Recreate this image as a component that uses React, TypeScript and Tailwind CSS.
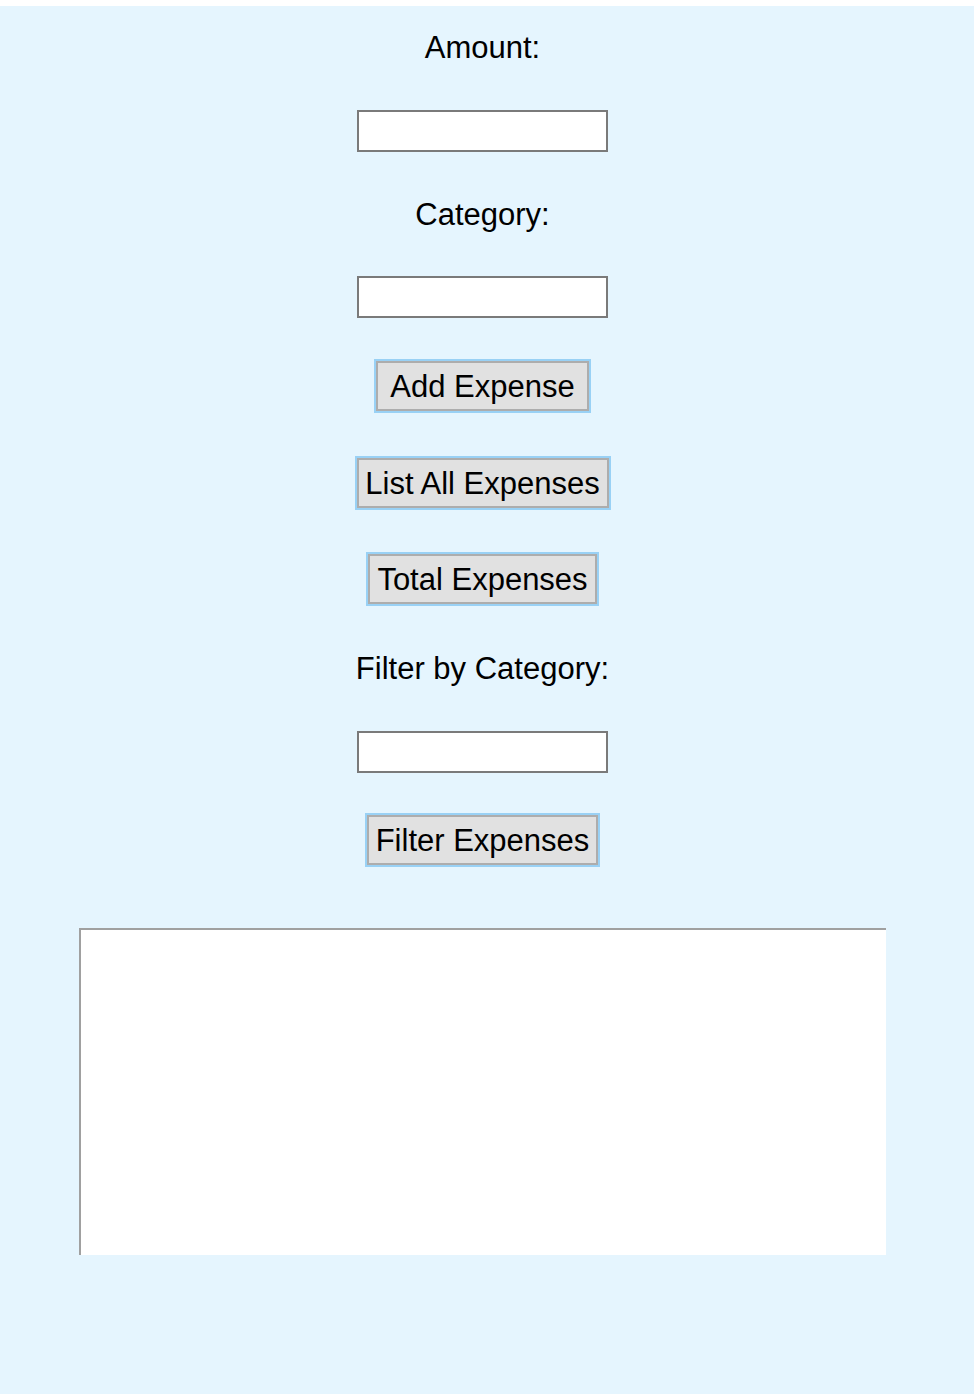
const Field = ({ className = "" }: { className?: string }) => (
  <input
    type="text"
    className={`block w-[251px] h-[42px] border-2 border-[#7a7a7a] bg-white outline-none ${className}`}
  />
);

const Btn = ({ label, className = "" }: { label: string; className?: string }) => (
  <button className={`block h-[54px] border-2 border-[#99d1f5] ${className}`}>
    <span className="flex h-full w-full items-center justify-center border-2 border-[#adadad] bg-[#e1e1e1] leading-none text-black whitespace-nowrap">
      {label}
    </span>
  </button>
);

export default function App() {
  return (
    <div className="bg-white pt-[6px] font-['Liberation_Sans',Arial,sans-serif] text-[31px] text-black">
      <div className="h-[1388px] w-full bg-[#e5f5fe]">
        <div className="flex w-[965px] flex-col items-center">
          <label className="mt-[25px] block h-[34px] leading-[34px]">Amount:</label>
          <Field className="mt-[45px]" />
          <label className="mt-[46px] block h-[34px] leading-[34px]">Category:</label>
          <Field className="mt-[44px]" />
          <Btn label="Add Expense" className="mt-[41px] w-[217px]" />
          <Btn label="List All Expenses" className="mt-[43px] w-[256px]" />
          <Btn label="Total Expenses" className="mt-[42px] w-[233px]" />
          <label className="mt-[46px] block h-[34px] leading-[34px]">Filter by Category:</label>
          <Field className="mt-[45px]" />
          <Btn label="Filter Expenses" className="mt-[40px] w-[235px]" />
          <div className="mt-[61px] h-[327px] w-[807px] border-l-2 border-t-2 border-[#a0a0a0] bg-white" />
        </div>
      </div>
    </div>
  );
}
